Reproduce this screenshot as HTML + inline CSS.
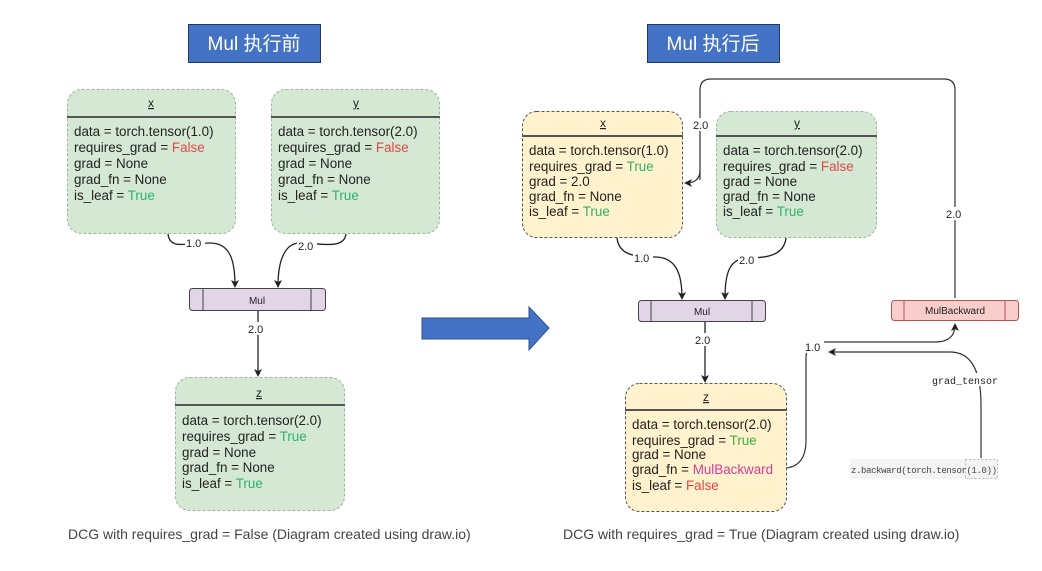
<!DOCTYPE html>
<html><head><meta charset="utf-8"><style>
body{margin:0;background:#fff;width:1042px;height:566px;overflow:hidden}
svg text{font-family:"Liberation Sans","Noto Sans CJK SC",sans-serif}
svg text.m{font-family:"Liberation Mono",monospace}
</style></head><body>
<svg width="1042" height="566" viewBox="0 0 1042 566" xmlns="http://www.w3.org/2000/svg">
<defs><marker id="a" markerWidth="8" markerHeight="8" refX="6" refY="4" orient="auto" markerUnits="userSpaceOnUse"><path d="M0,0 L8,4 L0,8 L2,4z" fill="#222"/></marker></defs>
<rect x="188.5" y="24.5" width="132" height="38" fill="#4472c4" stroke="#1f3864"/>
<text x="254" y="50" font-size="19" fill="#fff" text-anchor="middle">Mul 执行前</text>
<rect x="647.5" y="24.5" width="132" height="38" fill="#4472c4" stroke="#1f3864"/>
<text x="713" y="50" font-size="19" fill="#fff" text-anchor="middle">Mul 执行后</text>
<path d="M422,318 H529 V307 L549,328 L529,350 V339 H422z" fill="#4472c4" stroke="#2f528f"/>
<g font-size="13.4" fill="#222">
<rect x="67.5" y="89.5" width="168" height="144" rx="14" fill="#d5e8d4" stroke="#9ab99a" stroke-dasharray="3,2"/>
<line x1="67" y1="117" x2="236" y2="117" stroke="#555" stroke-width="2"/>
<text x="151" y="107" font-size="12" text-anchor="middle" text-decoration="underline">x</text>
<text x="74" y="136">data = torch.tensor(1.0)</text>
<text x="74" y="152">requires_grad = <tspan fill="#e04848">False</tspan></text>
<text x="74" y="168">grad = None</text>
<text x="74" y="184">grad_fn = None</text>
<text x="74" y="200">is_leaf = <tspan fill="#2fb36b">True</tspan></text>
<rect x="271.5" y="89.5" width="168" height="144" rx="14" fill="#d5e8d4" stroke="#9ab99a" stroke-dasharray="3,2"/>
<line x1="271" y1="117" x2="440" y2="117" stroke="#555" stroke-width="2"/>
<text x="356" y="107" font-size="12" text-anchor="middle" text-decoration="underline">y</text>
<text x="278" y="136">data = torch.tensor(2.0)</text>
<text x="278" y="152">requires_grad = <tspan fill="#e04848">False</tspan></text>
<text x="278" y="168">grad = None</text>
<text x="278" y="184">grad_fn = None</text>
<text x="278" y="200">is_leaf = <tspan fill="#2fb36b">True</tspan></text>
<path d="M168,234 C170,250 185,243 210,243 C230,243 235,260 235,286" fill="none" stroke="#222" stroke-width="1.3" marker-end="url(#a)"/>
<path d="M346,234 C344,250 320,243 300,243 C285,243 278,260 278,286" fill="none" stroke="#222" stroke-width="1.3" marker-end="url(#a)"/>
<rect x="185" y="236" width="20" height="13" fill="#fff"/><text x="186" y="247" font-size="11">1.0</text>
<rect x="297" y="239" width="20" height="13" fill="#fff"/><text x="298" y="250" font-size="11">2.0</text>
<rect x="189.5" y="288.5" width="136" height="22" rx="3" fill="#e1d5e7" stroke="#444"/>
<line x1="203" y1="289" x2="203" y2="310" stroke="#444"/><line x1="311" y1="289" x2="311" y2="310" stroke="#444"/>
<text x="257" y="304" font-size="10" text-anchor="middle">Mul</text>
<line x1="258" y1="311" x2="258" y2="375" stroke="#222" stroke-width="1.3" marker-end="url(#a)"/>
<rect x="247" y="322" width="22" height="13" fill="#fff"/><text x="248" y="333" font-size="11">2.0</text>
<rect x="175.5" y="377.5" width="169" height="133" rx="14" fill="#d5e8d4" stroke="#9ab99a" stroke-dasharray="3,2"/>
<line x1="175" y1="405" x2="345" y2="405" stroke="#555" stroke-width="2"/>
<text x="259" y="397" font-size="12" text-anchor="middle" text-decoration="underline">z</text>
<text x="182" y="425">data = torch.tensor(2.0)</text>
<text x="182" y="441">requires_grad = <tspan fill="#2fb36b">True</tspan></text>
<text x="182" y="457">grad = None</text>
<text x="182" y="472">grad_fn = None</text>
<text x="182" y="488">is_leaf = <tspan fill="#2fb36b">True</tspan></text>
<path d="M700,180 V90 Q700,79 711,79 H944 Q955,79 955,90 V298" fill="none" stroke="#333" stroke-width="1.2"/>
<path d="M700,170 Q700,183 686,183" fill="none" stroke="#333" stroke-width="1.2" marker-end="url(#a)"/>
<rect x="692" y="118" width="20" height="13" fill="#fff"/><text x="693" y="129" font-size="11">2.0</text>
<rect x="945" y="207" width="20" height="13" fill="#fff"/><text x="946" y="218" font-size="11">2.0</text>
<rect x="522.5" y="111.5" width="160" height="126" rx="14" fill="#fff2cc" stroke="#555" stroke-dasharray="3,2"/>
<line x1="522" y1="136" x2="683" y2="136" stroke="#555" stroke-width="2"/>
<text x="603" y="127" font-size="12" text-anchor="middle" text-decoration="underline">x</text>
<text x="529" y="155">data = torch.tensor(1.0)</text>
<text x="529" y="171">requires_grad = <tspan fill="#2fb36b">True</tspan></text>
<text x="529" y="186">grad = 2.0</text>
<text x="529" y="201">grad_fn = None</text>
<text x="529" y="216">is_leaf = <tspan fill="#2fb36b">True</tspan></text>
<rect x="716.5" y="111.5" width="160" height="126" rx="14" fill="#d5e8d4" stroke="#9ab99a" stroke-dasharray="3,2"/>
<line x1="716" y1="136" x2="877" y2="136" stroke="#555" stroke-width="2"/>
<text x="797" y="127" font-size="12" text-anchor="middle" text-decoration="underline">y</text>
<text x="723" y="155">data = torch.tensor(2.0)</text>
<text x="723" y="171">requires_grad = <tspan fill="#e04848">False</tspan></text>
<text x="723" y="186">grad = None</text>
<text x="723" y="201">grad_fn = None</text>
<text x="723" y="216">is_leaf = <tspan fill="#2fb36b">True</tspan></text>
<path d="M617,238 C619,254 632,257 655,257 C675,257 682,272 682,298" fill="none" stroke="#222" stroke-width="1.3" marker-end="url(#a)"/>
<path d="M786,238 C784,254 770,258 748,258 C730,258 725,272 725,298" fill="none" stroke="#222" stroke-width="1.3" marker-end="url(#a)"/>
<rect x="633" y="251" width="20" height="13" fill="#fff"/><text x="634" y="262" font-size="11">1.0</text>
<rect x="738" y="253" width="20" height="13" fill="#fff"/><text x="739" y="264" font-size="11">2.0</text>
<rect x="638.5" y="300.5" width="127" height="21" rx="3" fill="#e1d5e7" stroke="#444"/>
<line x1="651" y1="301" x2="651" y2="321" stroke="#444"/><line x1="752" y1="301" x2="752" y2="321" stroke="#444"/>
<text x="702" y="315" font-size="10" text-anchor="middle">Mul</text>
<line x1="705" y1="322" x2="705" y2="381" stroke="#222" stroke-width="1.3" marker-end="url(#a)"/>
<rect x="694" y="333" width="22" height="13" fill="#fff"/><text x="695" y="344" font-size="11">2.0</text>
<rect x="891.5" y="300.5" width="127" height="20" rx="3" fill="#f8cecc" stroke="#b85450"/>
<line x1="904" y1="301" x2="904" y2="320" stroke="#b85450"/><line x1="1005" y1="301" x2="1005" y2="320" stroke="#b85450"/>
<text x="955" y="314" font-size="10" text-anchor="middle">MulBackward</text>
<path d="M786,468 Q806,466 806,440 V358 Q806,342 825,342 H935 Q955,342 955,325" fill="none" stroke="#333" stroke-width="1.2" marker-end="url(#a)"/>
<rect x="804" y="340" width="20" height="13" fill="#fff"/><text x="805" y="351" font-size="11">1.0</text>
<path d="M981,458 V405 Q981,352 950,352 H830" fill="none" stroke="#333" stroke-width="1.2" marker-end="url(#a)"/>
<rect x="930" y="373" width="66" height="13" fill="#fff"/><text class="m" x="932" y="384" font-size="10" style="font-family:'Liberation Mono',monospace">grad_tensor</text>
<rect x="850" y="459" width="148" height="20" fill="#f4f4f4"/>
<rect x="965.5" y="459.5" width="32" height="19" fill="none" stroke="#bbb" stroke-dasharray="2,2"/>
<text class="m" x="851" y="473" font-size="9" fill="#444" style="font-family:'Liberation Mono',monospace" textLength="146">z.backward(torch.tensor(1.0))</text>
<rect x="625.5" y="383.5" width="161" height="128" rx="14" fill="#fff2cc" stroke="#555" stroke-dasharray="3,2"/>
<line x1="625" y1="410" x2="787" y2="410" stroke="#555" stroke-width="2"/>
<text x="706" y="401" font-size="12" text-anchor="middle" text-decoration="underline">z</text>
<text x="632" y="429">data = torch.tensor(2.0)</text>
<text x="632" y="445">requires_grad = <tspan fill="#3cb043">True</tspan></text>
<text x="632" y="459">grad = None</text>
<text x="632" y="474">grad_fn = <tspan fill="#d0409a">MulBackward</tspan></text>
<text x="632" y="490">is_leaf = <tspan fill="#e04848">False</tspan></text>
</g>
<text x="68" y="539" font-size="14" fill="#444">DCG with requires_grad = False (Diagram created using draw.io)</text>
<text x="563" y="539" font-size="14" fill="#444">DCG with requires_grad = True (Diagram created using draw.io)</text>
</svg>
</body></html>
